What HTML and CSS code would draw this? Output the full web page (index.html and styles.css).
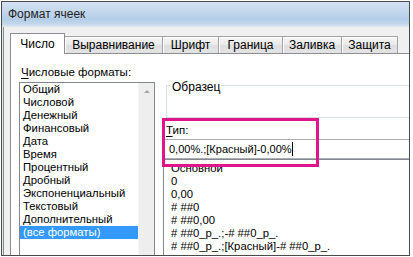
FILE: index.html
```html
<!DOCTYPE html>
<html lang="ru">

<head>
  <meta charset="UTF-8">
  <meta name="viewport" content="width=device-width, initial-scale=1.0">
  <title>Формат ячеек</title>
  <link rel="stylesheet" href="styles.css">
</head>

<body>
  <div class="window">
    <div class="titlebar">Формат ячеек</div>

    <div class="dialog">
      <div class="tabs">
        <div class="tab tab-number active">Число</div>
        <div class="tab tab-align">Выравнивание</div>
        <div class="tab tab-font">Шрифт</div>
        <div class="tab tab-border">Граница</div>
        <div class="tab tab-fill">Заливка</div>
        <div class="tab tab-protect">Защита</div>
      </div>

      <div class="panel">
        <div class="left-col">
          <div class="label"><u>Ч</u>исловые форматы:</div>
          <div class="listbox">
            <ul class="items">
              <li>Общий</li>
              <li>Числовой</li>
              <li>Денежный</li>
              <li>Финансовый</li>
              <li>Дата</li>
              <li>Время</li>
              <li>Процентный</li>
              <li>Дробный</li>
              <li>Экспоненциальный</li>
              <li>Текстовый</li>
              <li>Дополнительный</li>
              <li class="selected">(все форматы)</li>
            </ul>
            <div class="scrollbar">
              <span class="arrow-up"></span>
            </div>
          </div>
        </div>

        <div class="right-col">
          <div class="sample">
            <span class="sample-title">Образец</span>
          </div>

          <div class="label type-label"><u>Т</u>ип:</div>
          <div class="type-input">0,00%.;[Красный]-0,00%<span class="caret"></span></div>

          <ul class="format-list">
            <li>Основной</li>
            <li>0</li>
            <li>0,00</li>
            <li># ##0</li>
            <li># ##0,00</li>
            <li># ##0_р_.;-# ##0_р_.</li>
            <li># ##0_р_.;[Красный]-# ##0_р_.</li>
            <li># ##0,00_р_.;-# ##0,00_р_.</li>
          </ul>
        </div>

        <!-- annotation frame around the type field -->
        <div class="highlight"></div>
      </div>
    </div>
  </div>
</body>

</html>
```

FILE: styles.css
```css
body {
  margin: 0;
  background: #fff;
  font-family: "Liberation Sans", Arial, sans-serif;
  font-size: 12px;
  color: #000;
}

.window {
  margin: 1px 0 0 1px;
  width: 409px;
  height: 255px;
  box-sizing: border-box;
  border: 1px solid #4a4a4a;
  background: #dfe8f1;
  overflow: hidden;
  display: flex;
  flex-direction: column;
}

.titlebar {
  height: 25px;
  line-height: 25px;
  padding-left: 6px;
  color: #1e1e1e;
  background: linear-gradient(#d3e2f2 0%, #b4cde7 70%, #c2d6ea 86%, #dde7f1 100%);
  flex-shrink: 0;
}

.dialog {
  flex: 1;
  margin-left: 1px;
  border-left: 1px solid #8d8d8d;
  background: #f0f0f0;
  padding: 6px 0 0 6px;
  display: flex;
  flex-direction: column;
  min-height: 0;
}

/* tabs */

.tabs {
  display: flex;
  align-items: flex-end;
  height: 20px;
  flex-shrink: 0;
}

.tab {
  box-sizing: border-box;
  height: 17px;
  line-height: 16px;
  text-align: center;
  border: 1px solid #a3a3a3;
  border-bottom: none;
  border-right: none;
  background: linear-gradient(#f6f6f6, #e9e9e9 50%, #dedede 51%, #e3e3e3);
  box-shadow: inset 1px 1px 0 #fff;
  white-space: nowrap;
}

.tab:last-child {
  border-right: 1px solid #a3a3a3;
}

.tab.active {
  height: 21px;
  line-height: 20px;
  margin-bottom: -1px;
  background: #fff;
  box-shadow: none;
  border-color: #8c8e94;
  border-right: 1px solid #8c8e94;
  position: relative;
  z-index: 1;
}

.tab.active + .tab {
  border-left: none;
}

.tab-number { width: 55px; }
.tab-align { width: 97px; }
.tab-font { width: 56px; }
.tab-border { width: 64px; }
.tab-fill { width: 59px; }
.tab-protect { width: 57px; }

/* panel */

.panel {
  flex: 1;
  min-height: 0;
  display: flex;
  position: relative;
  background: #fff;
  border-top: 1px solid #8c8e94;
  border-left: 1px solid #8c8e94;
}

.label {
  line-height: 16px;
  font-size: 11.5px;
  white-space: nowrap;
  flex-shrink: 0;
}

.label u {
  text-decoration-thickness: 1px;
  text-underline-offset: 2px;
}

.left-col {
  width: 152px;
  box-sizing: border-box;
  padding: 10px 0 0 8px;
  display: flex;
  flex-direction: column;
  flex-shrink: 0;
}

.left-col .label {
  margin-left: 2px;
}

.listbox {
  margin-top: 2px;
  width: 136px;
  flex: 1;
  min-height: 0;
  box-sizing: border-box;
  border: 1px solid #828790;
  border-bottom: none;
  display: flex;
}

.items {
  flex: 1;
  margin: 0;
  padding: 0;
  list-style: none;
  font-size: 11.3px;
}

.items li {
  height: 13px;
  line-height: 13px;
  padding-left: 3px;
  white-space: nowrap;
}

.items li.selected {
  background: #3399ff;
  color: #fff;
}

.scrollbar {
  width: 16px;
  background: #eeeeee;
  border-left: 1px solid #f4f4f4;
  display: flex;
  justify-content: center;
  padding-top: 7px;
  box-sizing: border-box;
}

.arrow-up {
  width: 0;
  height: 0;
  border-left: 3px solid transparent;
  border-right: 3px solid transparent;
  border-bottom: 3px solid #a6a6a6;
}

.right-col {
  flex: 1;
  min-width: 0;
  display: flex;
  flex-direction: column;
}

.sample {
  margin: 31px 0 0 3px;
  height: 33px;
  flex-shrink: 0;
  box-sizing: border-box;
  border: 1px solid #d5dfe5;
  border-right: none;
}

.sample-title {
  display: inline-block;
  margin: -7px 0 0 4px;
  padding: 0 1px;
  line-height: 16px;
  background: #fff;
  vertical-align: top;
}

.type-label {
  margin: 4px 0 0 3px;
}

.type-input {
  margin-top: 1px;
  height: 20px;
  flex-shrink: 0;
  box-sizing: border-box;
  border: 1px solid #abadb3;
  border-right: none;
  padding-left: 5px;
  line-height: 18px;
  font-size: 11px;
  white-space: nowrap;
}

.caret {
  display: inline-block;
  width: 1px;
  height: 14px;
  background: #000;
  vertical-align: -3px;
}

.format-list {
  flex: 1;
  min-height: 0;
  overflow: hidden;
  margin: 0;
  padding: 2px 0 0 7px;
  list-style: none;
  font-size: 11.3px;
  border: 1px solid #828790;
  border-right: none;
  border-bottom: none;
}

.format-list li {
  height: 13px;
  line-height: 13px;
  white-space: nowrap;
}

.highlight {
  position: absolute;
  left: 151px;
  top: 64px;
  width: 157px;
  height: 49px;
  box-sizing: border-box;
  border: 3px solid #e0158a;
  z-index: 2;
}
```
